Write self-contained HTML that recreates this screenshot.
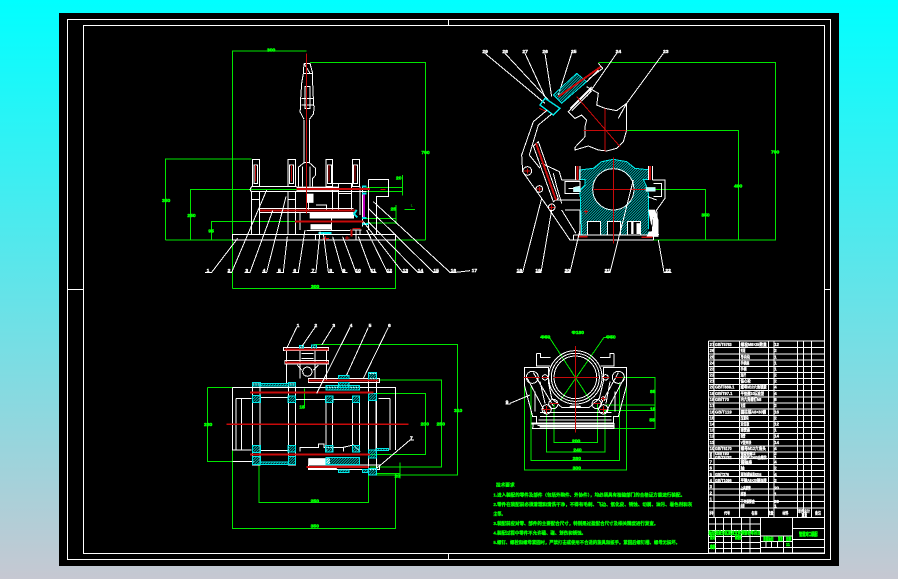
<!DOCTYPE html>
<html><head><meta charset="utf-8"><style>
html,body{margin:0;padding:0;width:898px;height:579px;overflow:hidden;background:linear-gradient(#00ffff,#c6c8d2)}
svg{position:absolute;left:0;top:0}
path,rect,circle,polyline,polygon,line{fill:none}
.w{stroke:#fff;stroke-width:3}
.g{stroke:#00e600;stroke-width:3}
.r{stroke:#c80a0a;stroke-width:3}
.R{stroke:#c80a0a;stroke-width:6}
.c{stroke:#00e8e8;stroke-width:3}
.m{stroke:#c000c0;stroke-width:6}
.W{fill:#fff!important;stroke:#fff;stroke-width:1}
.K{fill:#000!important}
.h{fill:url(#hat)!important;stroke:#00e8e8;stroke-width:3}
text{font-family:"Liberation Sans","Noto Sans CJK SC",sans-serif;font-weight:bold}
.tw{fill:#fff;font-size:15px;stroke:#fff;stroke-width:1.2}
.tg{fill:#00ff00;font-size:15px;stroke:#00ff00;stroke-width:1.6}
.cn{fill:#00ff00;font-size:13.5px;stroke:#00ff00;stroke-width:.9}
.b{fill:#fff;font-size:12.5px;stroke:#fff;stroke-width:.9}
</style></head><body>
<svg width="898" height="579" viewBox="0 0 898 579" xmlns="http://www.w3.org/2000/svg" shape-rendering="crispEdges">
<defs><pattern id="hat" patternUnits="userSpaceOnUse" width="8" height="8"><rect width="8" height="8" fill="#000"/><path d="M-2 10L10 -2M-2 2L2 -2M6 10L10 6" stroke="#00b4b4" stroke-width="2.2" fill="none"/></pattern></defs>
<rect x="59" y="13" width="780" height="553" style="fill:#000"/>
<g style="stroke:#fff;stroke-width:1">
<rect x="67.5" y="19.5" width="763" height="540"/>
<rect x="83.5" y="25.5" width="741" height="528"/>
<path d="M448.5 19V26M448.5 553V560M67 289.5H84M824 289.5H831"/>
</g>

<!-- VIEW 1 -->
<g transform="translate(150,40) scale(.33333)">
<path class="g" d="M247 745V33H469M247 745H736V600M480 67H826V600M47 600H826M47 600V357H305M122 600V448H640M185 600V544H640M650 442H757M650 455H757M757 405V467M650 535H738M650 549H738M738 495V552M763 508H795"/>
<text class="tg" x="351" y="34">300</text><text class="tg" x="483" y="744">300</text>
<text class="tg" x="36" y="486">350</text><text class="tg" x="112" y="531">250</text><text class="tg" x="175" y="578">95</text><text class="tg" x="814" y="342">700</text>
<text class="tg" x="738" y="418">20</text><text class="tg" x="722" y="512">25</text><text class="tg" x="782" y="500" style="font-size:12px;font-weight:normal;stroke-width:0">L</text>
<path class="w" d="M462 240V370M478 240V370M462 70H480L488 100V130L490 175V195L493 200L490 222L478 238M462 70L460 100L455 130L452 175V200L450 215L462 238M462 100H488M465 140H480V205H465ZM455 175H490M455 195H490M462 70L480 100"/>
<path class="w" d="M445 440V382L462 368H478L497 385V405L488 415V440M458 380V440M480 380V440"/>
<path class="w" d="M307 358H329V440H307ZM414 358H436V440H414ZM528 358H548V440H528ZM607 358H628V440H607ZM312 375H323V430H312ZM419 375H431V430H419ZM532 375H544V430H532ZM611 375H623V430H611Z"/>
<path class="r" d="M316 375V425M424 375V425M537 375V425M615 375V425"/>
<path class="w" d="M305 440H440M305 455H650M305 440L300 448L305 458V583M329 455V583M305 478H329M414 455V583M436 455V583M414 478H436M436 505H414M548 430H610M548 425V510M566 430V510M605 430V510M630 440V525M638 440V560M605 460H566M330 505H610M330 517H610M450 517V570M545 517V570M475 470V510M498 495H530V510"/>
<path class="W" d="M440 441H566V452H440ZM480 518H612V535H480ZM482 553H545V568H482ZM470 462H490V488H470Z"/>
<path class="w" d="M247 583H736V600H247ZM497 583V600M618 570V600M655 418H716V470H680V583M655 418V570M635 570H605V590M655 505L680 530M600 570H630V583M470 572H600"/>
<path class="R" d="M440 447H660M330 512H620M435 544H640"/>
<path class="r" d="M469 40V420M469 420V520M517 595H537M527 588V602M585 594H598M591 588V600M692 448H706"/>
<path class="R" d="M605 568V590"/><path class="r" d="M608 566H632"/>
<path class="m" d="M642 458V532"/>
<path class="c" style="stroke-width:6" d="M636 440H650M636 460H650M636 534H650M620 510L612 522L622 532M505 579H545M638 552H655"/>
<path class="w" d="M263 595L185 697H165M350 450L245 697H232M368 512L300 697H284M408 470L350 697H336M412 590L400 697H380M465 570L445 697H428M510 575L498 697H482M520 580L535 697H552M548 590L578 697H592M578 590L618 697H632M625 590L665 697H680M650 570L712 697H726M640 545L758 697H774M655 545L803 697H820M655 505L850 697H866M670 485L900 697H918L960 692"/>
<text class="tw" x="170" y="696">1</text><text class="tw" x="233" y="696">2</text><text class="tw" x="286" y="696">3</text><text class="tw" x="338" y="696">4</text><text class="tw" x="384" y="696">5</text><text class="tw" x="430" y="696">6</text><text class="tw" x="485" y="696">7</text><text class="tw" x="538" y="696">8</text><text class="tw" x="578" y="696">9</text><text class="tw" x="616" y="696">10</text><text class="tw" x="662" y="696">11</text><text class="tw" x="710" y="696">12</text><text class="tw" x="758" y="696">13</text><text class="tw" x="803" y="696">14</text><text class="tw" x="850" y="696">15</text><text class="tw" x="902" y="696">16</text>
</g>

<!-- VIEW 2 -->
<g transform="translate(470,40) scale(.33333)">
<path class="g" d="M385 67H917V600H550M405 271H805V600M430 448H707V600"/>
<text class="tg" x="903" y="340">700</text><text class="tg" x="792" y="442">490</text><text class="tg" x="694" y="530">350</text>
<path class="w" d="M45 40L225 190M105 40L235 180M165 40L225 170M225 40L245 170M305 40L265 165M440 40L350 170M580 40L470 190L445 235M470 190L450 225"/>
<polygon class="h" points="250,165 320,100 350,125 275,190"/>
<path class="R" d="M265 170L393 80"/>
<path class="w" d="M385 70L398 85L355 118M350 125L385 90M300 205L365 140M305 212L365 152"/>
<path class="w" d="M350 140L385 160L380 195L405 205L440 212L470 190V270L460 305L440 325L410 333L385 330L355 318L315 330V322L345 290V260L350 240L335 225L315 235L295 215L365 145"/>
<path class="r" d="M340 271H470M405 205V335M320 170L450 320"/>
<polygon class="c" style="stroke-width:4" points="225,175 270,205 250,225 210,195"/>
<path class="r" d="M208 205L230 215"/>
<path class="w" d="M232 210L190 245L155 345L158 395L215 475L300 600H550M245 222L205 255L178 345L210 385M190 318L205 305L265 475L250 485ZM258 480H330M215 370L268 395L275 420M275 420H330M285 425H330V460H285ZM295 445H330M285 510H330V585M275 510L318 580M250 400L260 440L275 490"/>
<path class="R" d="M198 310L258 480"/>
<circle class="w" cx="172" cy="393" r="13"/><circle class="w" cx="208" cy="447" r="10"/><circle class="w" cx="245" cy="502" r="10"/>
<path class="r" d="M162 393H182M172 385V401M200 447H216M208 439V455M237 502H253M245 494V510"/>
<polygon class="h" points="328,390 370,385 395,365 430,358 470,365 495,385 540,390 540,418 520,418 530,440 535,460 535,585 335,585 330,450 345,435 345,418 328,418"/>
<circle cx="430" cy="448" r="62" style="fill:#000;stroke:#e8ffff;stroke-width:3"/>
<rect class="K" x="352" y="545" width="40" height="40" style="stroke:#fff;stroke-width:3"/><rect class="K" x="412" y="545" width="40" height="40" style="stroke:#fff;stroke-width:3"/><rect class="K" x="472" y="545" width="40" height="40" style="stroke:#fff;stroke-width:3"/>
<path class="w" d="M317 378V420M330 378V420M536 378V420M548 378V420M548 420H585V475L560 510L565 585M550 430H575V470H550M310 585H550V600M310 585V600M533 470L560 480"/>
<path class="W" d="M535 510H555L565 540V590H530L545 560Z"/><path class="K" d="M550 530L545 555L530 575H545Z"/>
<path class="W" d="M484 545H490V582H484ZM500 550H512V582H500Z"/>
<path class="R" d="M323 378V420M540 378V420"/>
<path class="r" d="M430 352V610M370 448H552M342 515H354M348 508V522"/>
<path class="W" d="M310 442L330 438L332 456L310 456Z" style="fill:#bff!important"/><path class="W" d="M528 442H556V454H528Z" style="fill:#bff!important"/>
<path class="R" style="stroke-width:4" d="M322 590H352M515 592H548"/>
<path class="w" d="M215 475L158 697H140M245 510L213 697H196M330 570L300 697H284M490 420L420 697H404M565 600L582 697H605"/>
<text class="tw" x="5" y="696">17</text><text class="tw" x="140" y="696">18</text><text class="tw" x="196" y="696">19</text><text class="tw" x="284" y="696">20</text><text class="tw" x="404" y="696">21</text><text class="tw" x="586" y="696">22</text>
<text class="tw" x="37" y="39">29</text><text class="tw" x="97" y="39">28</text><text class="tw" x="157" y="39">27</text><text class="tw" x="217" y="39">26</text><text class="tw" x="303" y="39">25</text><text class="tw" x="437" y="39">24</text><text class="tw" x="579" y="39">23</text>
</g>

<!-- VIEW 3 -->
<g transform="translate(190,310) scale(.33333)">
<path class="g" d="M52 232H127M52 232V455H185M127 420V655H617V490M207 460V578H535V450M550 250H707V433H540M565 210H755V471H560M370 103H803V495H540M630 458V505M540 471H630M560 490H630M343 235V290"/>
<text class="tg" x="42" y="348">280</text><text class="tg" x="362" y="577">250</text><text class="tg" x="362" y="653">350</text><text class="tg" x="692" y="347">200</text><text class="tg" x="740" y="347">250</text><text class="tg" x="792" y="306">310</text><text class="tg" x="328" y="295">15</text><text class="tg" x="614" y="502">20</text>
<path class="w" d="M127 232H617V420M127 232V420H185M127 455H190M138 265V420M138 265H185M155 265V420M617 232H565M600 265V420M565 265H600M210 262V425M295 265V425M213 262H295M213 422H295M317 265V425M408 265V425M428 265V425M488 265V425M508 265V425M535 265V425M558 265V425M428 268H488M317 268H408M290 115V220M410 115V210M330 118V205M375 118V205"/>
<path class="w" d="M355 205H568V217H355ZM355 465H568V478H355ZM187 222V465H210V222ZM295 222H317V465H295ZM535 190H560V495H535ZM280 112H415V122H280ZM285 152H415V162H285ZM335 130H370M335 145H370M322 165L335 180M385 165L370 180"/>
<circle class="w" cx="352" cy="185" r="14"/>
<path class="W" d="M355 445H420V463H355ZM355 472H440V480H355Z"/>
<path class="w" d="M330 425V412H385V402H402V412H460V425M460 412L490 405L510 425"/>
<g>
<rect class="h" x="187" y="218" width="24" height="10"/><rect class="h" x="210" y="220" width="85" height="8"/><rect class="h" x="295" y="218" width="22" height="10"/>
<rect class="h" x="187" y="256" width="24" height="22"/><rect class="h" x="294" y="258" width="23" height="20"/><rect class="h" x="407" y="258" width="22" height="20"/><rect class="h" x="487" y="258" width="22" height="20"/>
<rect class="h" x="187" y="406" width="24" height="22"/><rect class="h" x="294" y="406" width="23" height="20"/><rect class="h" x="407" y="406" width="22" height="20"/><rect class="h" x="487" y="406" width="22" height="20"/>
<rect class="h" x="187" y="440" width="24" height="24"/><rect class="h" x="210" y="456" width="85" height="8"/><rect class="h" x="295" y="440" width="22" height="24"/>
<rect class="h" x="408" y="226" width="100" height="14"/><rect class="h" x="445" y="196" width="32" height="10"/><rect class="h" x="445" y="218" width="32" height="14"/>
<rect class="h" x="408" y="442" width="100" height="22"/><rect class="h" x="445" y="480" width="32" height="8"/>
<rect class="h" x="535" y="188" width="25" height="22"/><rect class="h" x="535" y="250" width="25" height="22"/><rect class="h" x="535" y="420" width="25" height="24"/><rect class="h" x="535" y="475" width="25" height="20"/>
<rect class="h" x="365" y="105" width="14" height="12"/><rect class="h" x="328" y="106" width="12" height="10"/>
<rect class="h" x="518" y="478" width="16" height="10"/><rect class="h" x="560" y="415" width="36" height="6"/>
</g>
<path class="R" d="M180 247H550M180 433H540M283 118H415M285 157H415M355 212H565M350 471H535"/>
<path class="r" style="stroke-width:4" d="M110 343H655"/>
<path class="w" d="M320 52L290 115M375 52L335 110M428 52L395 105M480 52L380 250M535 52L470 195M595 52L520 205M660 390L560 475M660 390H672"/>
<text class="tw" x="320" y="51">1</text><text class="tw" x="373" y="51">2</text><text class="tw" x="427" y="51">3</text><text class="tw" x="479" y="51">4</text><text class="tw" x="536" y="51">5</text><text class="tw" x="594" y="51">6</text><text class="tw" x="660" y="388">7</text>
</g>

<!-- VIEW 4 -->
<g transform="translate(490,320) scale(.33333)">
<path class="g" d="M150 52H178L300 240M370 52H342L212 240M385 172H495V325H370M340 255H495M340 272H495M103 172V450H410V172M123 200V422H388V190M170 265V396H345V270M192 250V368H322V250"/>
<text class="tg" x="152" y="55">Φ50</text><text class="tg" x="348" y="55">Φ50</text><text class="tg" x="245" y="42">Φ180</text>
<text class="tg" x="246" y="367">200</text><text class="tg" x="250" y="395">240</text><text class="tg" x="248" y="420">280</text><text class="tg" x="248" y="448">300</text><text class="tg" x="480" y="219">85</text><text class="tg" x="480" y="272">15</text><text class="tg" x="478" y="305">55</text>
<circle class="w" cx="256" cy="172" r="64"/><circle class="w" cx="256" cy="172" r="72"/><circle class="w" cx="256" cy="172" r="80"/>
<path class="w" d="M140 100H152V112H182M372 100H360V112H330M140 100V138H180M372 100V138H332M103 143H175V185L185 235L215 262H298L328 235L340 185V143H410V195L385 290H370V310H140V290H128L103 195ZM135 215V275M375 215V275M150 185L165 250M360 185L348 250M150 277H365M150 290H365M130 310H372V325H128ZM145 300H365M143 316H370"/>
<path class="W" d="M125 308H372V313H125ZM150 318H372V322H150ZM240 258H272V264H240Z"/>
<path class="w" d="M112 175L168 282M130 158L190 258M402 175L345 282M385 158L330 258"/>
<circle class="w" cx="127" cy="172" r="18"/><circle class="w" cx="385" cy="172" r="18"/>
<circle class="w" cx="165" cy="172" r="8"/><circle class="w" cx="347" cy="172" r="8"/>
<circle class="w" cx="170" cy="268" r="14"/><circle class="w" cx="340" cy="268" r="14"/>
<circle class="w" cx="190" cy="252" r="14"/><circle class="w" cx="320" cy="252" r="14"/><circle class="w" cx="340" cy="236" r="6"/>
<path class="r" d="M256 78V338M190 172H325M100 172H150M155 172H176M338 172H358M375 172H398M158 268H182M330 268H350M180 250H205M310 250H332M170 258V280M340 258V280M333 236H347M340 229V243"/>
<path class="w" d="M60 250L120 225M46 252H62"/>
<text class="tw" x="47" y="250">9</text>
<!-- notes -->
<text class="cn" x="18" y="500" textLength="56" lengthAdjust="spacingAndGlyphs">技术要求</text>
<text class="cn" x="10" y="530" textLength="575" lengthAdjust="spacingAndGlyphs">1.进入装配的零件及部件（包括外购件、外协件），均必须具有检验部门的合格证方能进行装配。</text>
<text class="cn" x="10" y="558" textLength="597" lengthAdjust="spacingAndGlyphs">2.零件在装配前必须清理和清洗干净，不得有毛刺、飞边、氧化皮、锈蚀、切屑、油污、着色剂和灰</text>
<text class="cn" x="10" y="586" textLength="36" lengthAdjust="spacingAndGlyphs">尘等。</text>
<text class="cn" x="10" y="615" textLength="495" lengthAdjust="spacingAndGlyphs">3.装配前应对零、部件的主要配合尺寸，特别是过盈配合尺寸及相关精度进行复查。</text>
<text class="cn" x="10" y="644" textLength="278" lengthAdjust="spacingAndGlyphs">4.装配过程中零件不允许磕、碰、划伤和锈蚀。</text>
<text class="cn" x="10" y="672" textLength="560" lengthAdjust="spacingAndGlyphs">5.螺钉、螺栓和螺母紧固时，严禁打击或使用不合适的旋具和扳手。紧固后螺钉槽、螺母无损坏。</text>
</g>

<!-- BOM -->
<g transform="translate(700,335) scale(.33333)">
<path class="w" d="M25 18H373V654M25 18V654H373"/>
<path class="w" d="M25 38H373M25 57H373M25 75H373M25 94H373M25 112H373M25 130H373M25 149H373M25 167H373M25 186H373M25 204H373M25 222H373M25 241H373M25 259H373M25 278H373M25 296H373M25 314H373M25 333H373M25 351H373M25 370H373M25 388H373M25 406H373M25 425H373M25 443H373M25 462H373M25 480H373M25 499H373M25 519H373M25 547H373"/>
<path class="w" d="M42 18V547M118 18V547M205 18V547M222 18V547M293 18V547M310 18V547M335 18V547"/>
<path class="w" d="M277 547V654M182 547V654M25 567H182M25 586H182M25 604H182M25 622H182M25 640H182M47 547V654M70 547V654M95 547V654M125 547V654M150 547V654M182 603H277M182 620H277M182 638H277M277 580H373M277 613H373M277 637H373M198 620V638M215 620V638M232 620V638M250 603V654"/>
<g class="b">
<text x="29" y="33">27</text><text x="45" y="33" textLength="50" lengthAdjust="spacingAndGlyphs">GB/T5783</text><text x="122" y="33" textLength="78" lengthAdjust="spacingAndGlyphs">螺栓M8×25数量</text><text x="223" y="33">12</text>
<text x="29" y="51">26</text><text x="122" y="51" textLength="14" lengthAdjust="spacingAndGlyphs">夹紧板</text><text x="223" y="51">2</text>
<text x="29" y="70">25</text><text x="122" y="70" textLength="28" lengthAdjust="spacingAndGlyphs">导向块</text><text x="223" y="70">1</text>
<text x="29" y="88">24</text><text x="122" y="88" textLength="26" lengthAdjust="spacingAndGlyphs">手柄座</text><text x="223" y="88">1</text>
<text x="29" y="106">23</text><text x="122" y="106" textLength="18" lengthAdjust="spacingAndGlyphs">手柄</text><text x="223" y="106">1</text>
<text x="29" y="125">22</text><text x="122" y="125" textLength="16" lengthAdjust="spacingAndGlyphs">连杆</text><text x="223" y="125">2</text>
<text x="29" y="143">21</text><text x="122" y="143" textLength="30" lengthAdjust="spacingAndGlyphs">偏心轮</text><text x="223" y="143">2</text>
<text x="29" y="161">20</text><text x="45" y="161" textLength="58" lengthAdjust="spacingAndGlyphs">GB/T889.1</text><text x="122" y="161" textLength="78" lengthAdjust="spacingAndGlyphs">螺母M10六角锁紧</text><text x="223" y="161">4</text>
<text x="29" y="180">19</text><text x="45" y="180" textLength="52" lengthAdjust="spacingAndGlyphs">GB/T97.1</text><text x="122" y="180" textLength="70" lengthAdjust="spacingAndGlyphs">平垫圈10标准型</text><text x="223" y="180">4</text>
<text x="29" y="198">18</text><text x="45" y="198" textLength="42" lengthAdjust="spacingAndGlyphs">GB/T70</text><text x="122" y="198" textLength="62" lengthAdjust="spacingAndGlyphs">内六角螺钉M8</text><text x="223" y="198">8</text>
<text x="29" y="216">17</text><text x="122" y="216" textLength="14" lengthAdjust="spacingAndGlyphs">支架</text><text x="223" y="216">2</text>
<text x="29" y="235">16</text><text x="45" y="235" textLength="50" lengthAdjust="spacingAndGlyphs">GB/T119</text><text x="122" y="235" textLength="76" lengthAdjust="spacingAndGlyphs">圆柱销A8×30钢</text><text x="223" y="235">16</text>
<text x="29" y="253">15</text><text x="122" y="253" textLength="24" lengthAdjust="spacingAndGlyphs">压紧块</text><text x="223" y="253">2</text>
<text x="29" y="272">14</text><text x="122" y="272" textLength="26" lengthAdjust="spacingAndGlyphs">定位板</text><text x="223" y="272">12</text>
<text x="29" y="290">13</text><text x="122" y="290" textLength="28" lengthAdjust="spacingAndGlyphs">弹簧座</text><text x="223" y="290">1</text>
<text x="29" y="308">12</text><text x="122" y="308" textLength="14" lengthAdjust="spacingAndGlyphs">弹簧</text><text x="223" y="308">14</text>
<text x="29" y="327">11</text><text x="122" y="327" textLength="32" lengthAdjust="spacingAndGlyphs">V型夹块</text><text x="223" y="327">14</text>
<text x="29" y="345">10</text><text x="45" y="345" textLength="50" lengthAdjust="spacingAndGlyphs">GB/T6170</text><text x="122" y="345" textLength="76" lengthAdjust="spacingAndGlyphs">螺母M12六角头</text><text x="223" y="345">4</text>
<text x="29" y="360">9</text><text x="45" y="360" textLength="42" lengthAdjust="spacingAndGlyphs">GB/T93</text><text x="122" y="360" textLength="44" lengthAdjust="spacingAndGlyphs">弹簧垫圈12</text><text x="223" y="360">2</text>
<text x="29" y="369">8</text><text x="45" y="372" textLength="50" lengthAdjust="spacingAndGlyphs">GB/T5782</text><text x="122" y="372" textLength="78" lengthAdjust="spacingAndGlyphs">螺栓M12×60全螺纹</text><text x="223" y="372">1</text>
<text x="29" y="386">7</text><text x="122" y="386" textLength="34" lengthAdjust="spacingAndGlyphs">销轴座</text><text x="223" y="386">4</text>
<text x="29" y="404">6</text><text x="122" y="404" textLength="12" lengthAdjust="spacingAndGlyphs">轴</text><text x="223" y="404">2</text>
<text x="29" y="423">5</text><text x="45" y="423" textLength="42" lengthAdjust="spacingAndGlyphs">GB/T276</text><text x="122" y="423" textLength="62" lengthAdjust="spacingAndGlyphs">深沟球轴承6204</text><text x="223" y="423">4</text>
<text x="29" y="441">4</text><text x="45" y="441" textLength="50" lengthAdjust="spacingAndGlyphs">GB/T1096</text><text x="122" y="441" textLength="78" lengthAdjust="spacingAndGlyphs">平键A6×20键连接</text><text x="223" y="441">2</text>
<text x="29" y="459">3</text><text x="122" y="463" textLength="30" lengthAdjust="spacingAndGlyphs">上夹紧臂</text><text x="223" y="463">20</text>
<text x="29" y="478">2</text><text x="122" y="482" textLength="16" lengthAdjust="spacingAndGlyphs">底板</text><text x="223" y="482">1</text>
<text x="29" y="497">1</text><text x="122" y="504" textLength="42" lengthAdjust="spacingAndGlyphs">下夹紧臂座</text><text x="223" y="504">20</text>
<text x="122" y="517" textLength="12" lengthAdjust="spacingAndGlyphs">机架</text><text x="223" y="517">1</text>
<text x="28" y="538" textLength="12" lengthAdjust="spacingAndGlyphs">序号</text><text x="72" y="538" textLength="18" lengthAdjust="spacingAndGlyphs">代号</text><text x="154" y="538" textLength="18" lengthAdjust="spacingAndGlyphs">名称</text><text x="204" y="538" textLength="16" lengthAdjust="spacingAndGlyphs">数量</text><text x="247" y="538" textLength="18" lengthAdjust="spacingAndGlyphs">材料</text><text x="294" y="532" textLength="36" lengthAdjust="spacingAndGlyphs">单件总计</text><text x="305" y="544" textLength="16" lengthAdjust="spacingAndGlyphs">重量</text><text x="345" y="538" textLength="18" lengthAdjust="spacingAndGlyphs">备注</text>
</g>
<g>
<text x="26" y="598" textLength="155" lengthAdjust="spacingAndGlyphs" class="tg" style="font-size:13px">标记处数分区更改文件号签名年月日</text>
<text x="30" y="612" class="tg" style="font-size:13px" textLength="16" lengthAdjust="spacingAndGlyphs">设计</text><text x="105" y="612" class="tg" style="font-size:13px" textLength="20" lengthAdjust="spacingAndGlyphs">标准化</text>
<text x="30" y="640" class="tg" style="font-size:13px" textLength="16" lengthAdjust="spacingAndGlyphs">审核</text>
<text x="190" y="616" class="tg" style="font-size:13px" textLength="30" lengthAdjust="spacingAndGlyphs">阶段标记</text><text x="234" y="616" class="tg" style="font-size:13px" textLength="14" lengthAdjust="spacingAndGlyphs">重量</text><text x="258" y="616" class="tg" style="font-size:13px" textLength="16" lengthAdjust="spacingAndGlyphs">比例</text><text x="258" y="633" class="tg" style="font-size:13px" textLength="12" lengthAdjust="spacingAndGlyphs">11</text>
<text x="297" y="603" class="tg" style="font-size:15px" textLength="56" lengthAdjust="spacingAndGlyphs">管道对口装配</text>
</g>
</g>
</svg>
</body></html>
